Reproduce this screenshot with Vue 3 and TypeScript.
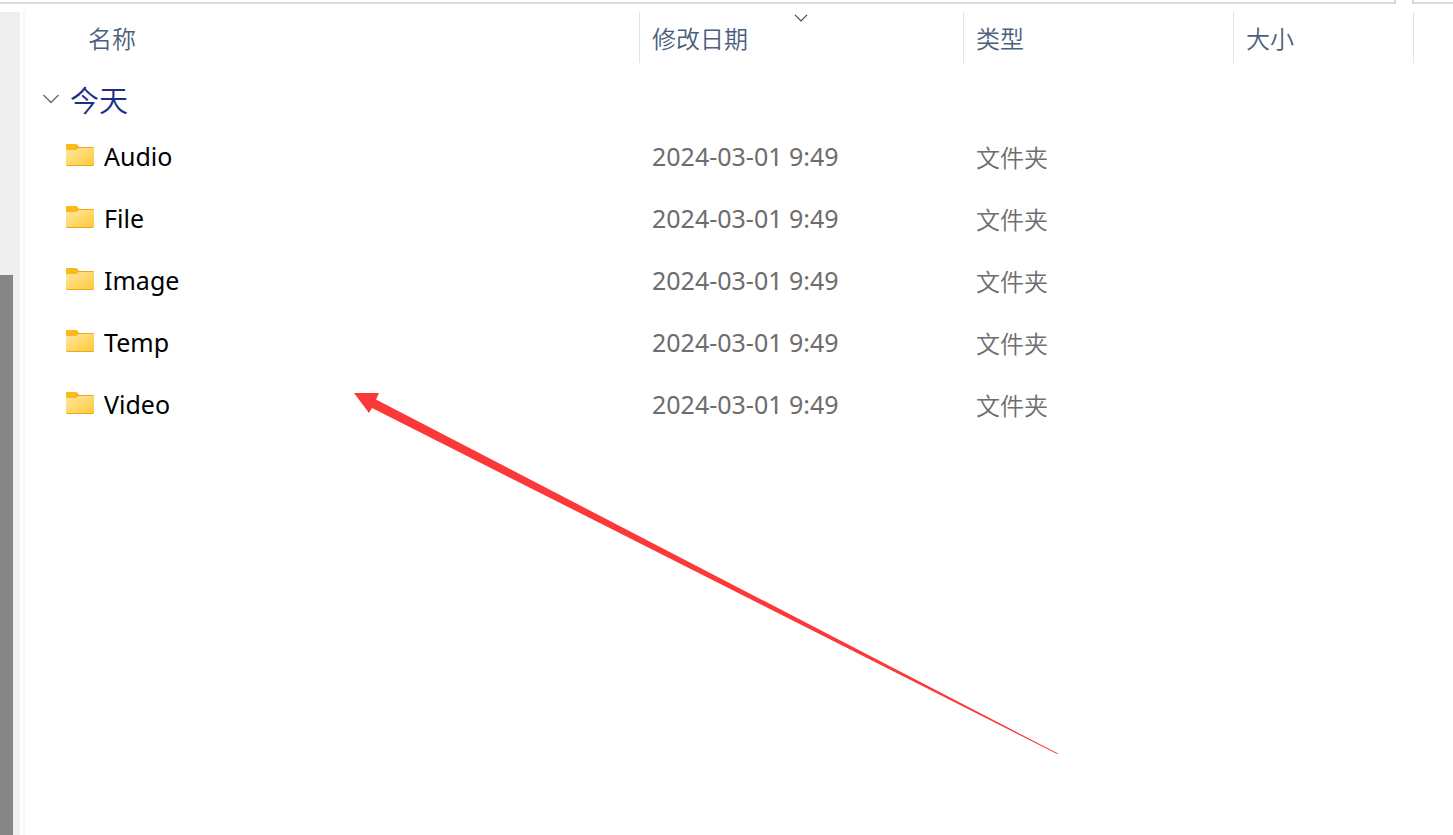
<script setup lang="ts">
interface Entry {
  name: string
  modified: string
  kind: string
}

const entries: Entry[] = ['Audio', 'File', 'Image', 'Temp', 'Video'].map((name) => ({
  name,
  modified: '2024-03-01 9:49',
  kind: '文件夹',
}))
</script>

<template>
  <div class="explorer">
    <div class="toolbar">
      <div class="address"></div>
      <div class="search"></div>
    </div>
    <div class="body">
      <div class="scroll-track"><div class="scroll-thumb"></div></div>
      <main class="content">
        <table class="files">
          <colgroup>
            <col class="col-name" />
            <col class="col-date" />
            <col class="col-type" />
            <col class="col-size" />
            <col />
          </colgroup>
          <thead>
            <tr>
              <th scope="col" class="first">名称</th>
              <th scope="col" class="sorted" aria-sort="descending">
                修改日期
                <svg class="sort" width="14" height="8" viewBox="0 0 14 8" aria-hidden="true">
                  <path d="M1 .8 7 6.8l6-6" fill="none" stroke="#444" stroke-width="1.2" />
                </svg>
              </th>
              <th scope="col">类型</th>
              <th scope="col">大小</th>
              <td></td>
            </tr>
          </thead>
          <tbody>
            <tr class="group-row">
              <td colspan="5">
                <button type="button" class="group" aria-expanded="true">
                  <svg width="16" height="10" viewBox="0 0 16 10" aria-hidden="true">
                    <path d="M.5 1 8 8.5 15.500 1" fill="none" stroke="#6b6b6b" stroke-width="1.4" />
                  </svg>
                  <span>今天</span>
                </button>
              </td>
            </tr>
            <tr v-for="entry in entries" :key="entry.name" class="entry">
              <td>
                <div class="name">
                  <svg class="folder" width="28" height="22" viewBox="0 0 28 22" aria-hidden="true">
                    <defs>
                      <linearGradient :id="`face-${entry.name}`" x1="0" y1="0" x2="1" y2="1">
                        <stop offset="0" stop-color="#ffe8a2" />
                        <stop offset="1" stop-color="#ffc938" />
                      </linearGradient>
                    </defs>
                    <path d="M0 1.200Q0 0 1.200 0H9.500Q10.300 0 11 .8L13 3H27Q28 3 28 4V20.500Q28 22 26.500 22H1.500Q0 22 0 20.500Z" fill="#e9a820" />
                    <path d="M0 1.200Q0 0 1.200 0H9.500Q10.300 0 11 .8L12.300 2.300V4L10 6H0Z" fill="#fcb91c" />
                    <path d="M0 6H9.500Q10.400 6 11 5.400L12 4.500Q12.500 4 13.200 4H28V20Q28 21 27 21H1Q0 21 0 20Z" :fill="`url(#face-${entry.name})`" />
                  </svg>
                  <span>{{ entry.name }}</span>
                </div>
              </td>
              <td class="detail">{{ entry.modified }}</td>
              <td class="detail kind">{{ entry.kind }}</td>
              <td></td>
              <td></td>
            </tr>
          </tbody>
        </table>
      </main>
    </div>
    <svg class="arrow" width="705" height="362" viewBox="0 0 705 362" aria-hidden="true">
      <path d="M0 0H25L22 6.500 704 360.500 703.600 361.200 18 15 15 20Z" fill="#fc3838" />
    </svg>
  </div>
</template>

<style>
body {
  margin: 0;
  background: #fff;
}
</style>

<style scoped>
.explorer {
  position: relative;
  display: flex;
  flex-direction: column;
  min-height: 100vh;
  overflow: hidden;
  background: #fff;
  font-family: "Noto Sans", "Noto Sans CJK SC", sans-serif;
  font-size: 25px;
}

.toolbar {
  display: flex;
  gap: 16px;
  height: 4px;
  margin-bottom: 8px;
}

.address,
.search {
  box-sizing: border-box;
  border-bottom: 2px solid #d9d9d9;
}

.address {
  flex: 1;
  border-right: 2px solid #d9d9d9;
}

.search {
  width: 41px;
  border-left: 2px solid #d9d9d9;
}

.body {
  display: flex;
  flex: 1;
}

.scroll-track {
  display: flex;
  flex-direction: column;
  justify-content: flex-end;
  width: 20px;
  margin-right: 3px;
  background: #efefef;
}

.scroll-thumb {
  width: 13px;
  height: 68%;
  background: #858585;
}

.content {
  flex: 1;
  border-left: 2px solid #f7f7f7;
}

.files {
  width: 100%;
  table-layout: fixed;
  border-collapse: separate;
  border-spacing: 0;
}

.col-name {
  width: 615px;
}

.col-date {
  width: 324px;
}

.col-type {
  width: 270px;
}

.col-size {
  width: 180px;
}

th,
td {
  padding: 0;
  text-align: left;
}

th {
  box-sizing: border-box;
  height: 51px;
  padding-left: 12px;
  border-right: 1px solid #e3e3e3;
  color: #4a5f7d;
  font-family: "Noto Sans CJK SC", sans-serif;
  font-size: 24px;
  font-weight: 350;
  line-height: 50px;
}

.first {
  padding-left: 63px;
}

.sorted {
  position: relative;
}

.sort {
  position: absolute;
  top: 2px;
  left: calc(50% - 8px);
}

.group-row td {
  height: 62px;
  vertical-align: middle;
}

.group {
  display: flex;
  align-items: center;
  gap: 11px;
  margin: 10px 0 0 18px;
  padding: 0;
  border: 0;
  background: none;
  color: #1b2f8a;
  font-family: "Noto Sans CJK SC", sans-serif;
  font-size: 29px;
  font-weight: 350;
  line-height: 40px;
}

.entry td {
  height: 62px;
}

.name {
  display: flex;
  align-items: center;
  gap: 10px;
  padding-left: 41px;
  color: #000;
}

.folder {
  margin-bottom: 3px;
}

.entry .detail {
  padding-left: 12px;
  color: #6d6d6d;
}

.entry .kind {
  font-family: "Noto Sans CJK SC", sans-serif;
  font-size: 24px;
  font-weight: 350;
}

.arrow {
  position: absolute;
  top: 393px;
  left: 354px;
  pointer-events: none;
}
</style>
